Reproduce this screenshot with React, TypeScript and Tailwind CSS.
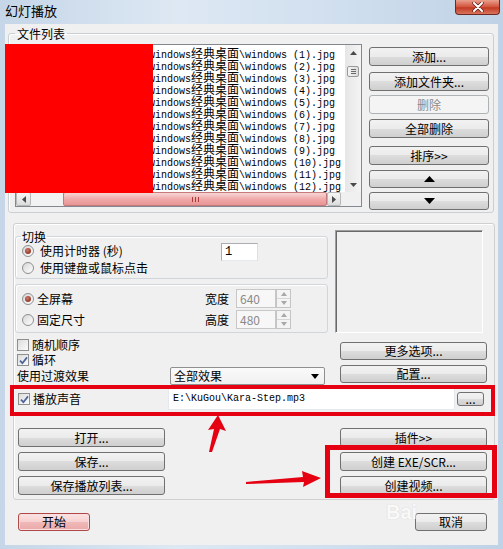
import React from 'react';

const cjk = "font-[family-name:'Noto_Sans_CJK_SC',sans-serif]";
const mono = "font-[family-name:'Liberation_Mono','Noto_Sans_CJK_SC',monospace]";

const Btn: React.FC<{ children?: React.ReactNode; className?: string; disabled?: boolean; pink?: boolean }> = ({ children, className = '', disabled, pink }) => {
  let look = 'border-[#707070] bg-[linear-gradient(#f2f2f2,#ebebeb_50%,#dddddd_50%,#cfcfcf)] text-black';
  if (disabled) look = 'border-[#adb2b5] bg-[#f4f4f4] text-[#8a8a8a]';
  if (pink) look = 'border-[#b04848] bg-[linear-gradient(#fbe4e4,#f6cfcf_50%,#f0b9b9_50%,#eaa8a8)] text-black shadow-[inset_0_0_0_1px_#f8dede]';
  return (
    <div className={`flex items-center justify-center rounded-[3px] border text-[12px] leading-none ${look} ${className}`}>
      {children}
    </div>
  );
};

const Radio: React.FC<{ checked?: boolean }> = ({ checked }) => (
  <span className="w-[12px] h-[12px] shrink-0 rounded-full border border-[#8e8f8f] bg-[linear-gradient(135deg,#d6d6d6,#ffffff)] flex items-center justify-center">
    {checked && <span className="w-[6px] h-[6px] rounded-full bg-[radial-gradient(circle_at_40%_35%,#d07a68,#7a1e12)]" />}
  </span>
);

const Check: React.FC<{ checked?: boolean }> = ({ checked }) => (
  <span className="w-[12px] h-[12px] shrink-0 border border-[#8e8f8f] bg-[linear-gradient(135deg,#dcdcdc,#fbfbfb)] flex items-center justify-center">
    {checked && (
      <svg width="9" height="9" viewBox="0 0 9 9">
        <path d="M1 4.6 L3.4 7.2 L8 1.4" stroke="#4d6297" strokeWidth="1.7" fill="none" />
      </svg>
    )}
  </span>
);

const Spin: React.FC = () => (
  <div className="w-[15px] h-[19px] flex flex-col border border-[#c4c4c4] bg-[#f4f4f4]">
    <div className="flex-1 flex items-center justify-center border-b border-[#d6d6d6]">
      <svg width="6" height="4" viewBox="0 0 6 4"><path d="M0 4 L3 0 L6 4Z" fill="#a8a8a8" /></svg>
    </div>
    <div className="flex-1 flex items-center justify-center">
      <svg width="6" height="4" viewBox="0 0 6 4"><path d="M0 0 L3 4 L6 0Z" fill="#a8a8a8" /></svg>
    </div>
  </div>
);

const rows = Array.from({ length: 12 }, (_, i) => i + 1);

export default function App() {
  return (
    <div className={`relative w-[503px] h-[549px] overflow-hidden flex flex-col bg-[linear-gradient(90deg,#c5d6e8,#dde8f3_35%,#cfdeee_70%,#bfd2e6)] ${cjk}`}>
      {/* title bar */}
      <div className="h-[24px] shrink-0 flex items-start">
        <span className="ml-[5px] mt-[4px] text-[13px] leading-[14px] text-black">幻灯播放</span>
        <div className="ml-auto mr-[3px] w-[45px] h-[15px] rounded-b-[4px] border border-t-0 border-[#6e2a22] bg-[linear-gradient(#e9a08e,#d2533c_50%,#c23a22_55%,#d9745c)] flex items-center justify-center">
          <svg width="12" height="10" viewBox="0 0 12 10">
            <path d="M2 1 L10 9 M10 1 L2 9" stroke="#5a2018" strokeWidth="3.4" strokeLinecap="round" />
            <path d="M2 1 L10 9 M10 1 L2 9" stroke="#ffffff" strokeWidth="2" strokeLinecap="round" />
          </svg>
        </div>
      </div>

      {/* client area */}
      <div className="ml-[5px] w-[493px] h-[521px] shrink-0 bg-[#f0f0f0] flex flex-col">
        {/* 文件列表 */}
        <fieldset className="ml-[3px] mt-[3px] w-[486px] h-[186px] border border-[#c8d0d6] rounded-[3px] pl-[6px] shadow-[inset_1px_1px_0_#ffffff]">
          <legend className="px-[2px] text-[12px] leading-[13px]">文件列表</legend>
          <div className="flex mt-[4px]">
            {/* list box */}
            <div className="w-[347px] h-[163px] border border-[#828790] bg-white flex flex-col">
              <div className="flex h-[147px]">
                <div className={`w-[329px] overflow-hidden pt-[2px] ${mono}`}>
                  {rows.map((i) => (
                    <div key={i} className="h-[12px] leading-[12px] whitespace-pre pl-[133px] text-black">
                      <span className="text-[10px]">windows</span>
                      <span className={`text-[12px] ${cjk}`}>经典桌面</span>
                      <span className="text-[10px]">{`\\windows (${i}).jpg`}</span>
                    </div>
                  ))}
                </div>
                {/* vertical scrollbar */}
                <div className="w-[16px] bg-[linear-gradient(90deg,#e6e6e6,#f4f4f4)] flex flex-col items-center">
                  <div className="h-[15px] w-full flex items-center justify-center">
                    <svg width="7" height="4" viewBox="0 0 7 4"><path d="M0 4 L3.5 0 L7 4Z" fill="#4a4a4a" /></svg>
                  </div>
                  <div className="mt-[6px] w-[12px] h-[11px] rounded-[2px] border border-[#9a9a9a] bg-[linear-gradient(90deg,#f4f4f4,#dcdcdc)] flex flex-col items-center justify-center gap-[1px]">
                    <span className="w-[5px] h-[1px] bg-[#6a6a6a]" />
                    <span className="w-[5px] h-[1px] bg-[#6a6a6a]" />
                    <span className="w-[5px] h-[1px] bg-[#6a6a6a]" />
                  </div>
                  <div className="mt-auto h-[15px] w-full flex items-center justify-center">
                    <svg width="7" height="4" viewBox="0 0 7 4"><path d="M0 0 L3.5 4 L7 0Z" fill="#4a4a4a" /></svg>
                  </div>
                </div>
              </div>
              {/* horizontal scrollbar */}
              <div className="flex h-[14px] bg-[#ececec]">
                <div className="w-[15px] h-full border border-[#b8b8b8] rounded-[2px] bg-[linear-gradient(#f6f6f6,#dcdcdc)] flex items-center justify-center">
                  <svg width="4" height="7" viewBox="0 0 4 7"><path d="M4 0 L0 3.5 L4 7Z" fill="#4a4a4a" /></svg>
                </div>
                <div className="w-[32px] bg-[#f2f2f2]" />
                <div className="w-[264px] h-full rounded-[2px] border border-[#c47a7a] bg-[linear-gradient(#f9d6d6,#f0aaaa_50%,#e99494)] flex items-center justify-center gap-[2px]">
                  <span className="w-[1px] h-[5px] bg-[#a83a3a]" />
                  <span className="w-[1px] h-[5px] bg-[#a83a3a]" />
                  <span className="w-[1px] h-[5px] bg-[#a83a3a]" />
                </div>
                <div className="w-[14px] h-full border border-[#b8b8b8] rounded-[2px] bg-[linear-gradient(#f6f6f6,#dcdcdc)] flex items-center justify-center">
                  <svg width="4" height="7" viewBox="0 0 4 7"><path d="M0 0 L4 3.5 L0 7Z" fill="#4a4a4a" /></svg>
                </div>
                <div className="flex-1 bg-[#f0f0f0]" />
              </div>
            </div>
            {/* buttons */}
            <div className="ml-[7px] w-[120px] flex flex-col">
              <Btn className="mt-[3px] h-[19px]">添加...</Btn>
              <Btn className="mt-[6px] h-[19px]">添加文件夹...</Btn>
              <Btn disabled className="mt-[4px] h-[19px]">删除</Btn>
              <Btn className="mt-[5px] h-[19px]">全部删除</Btn>
              <Btn className="mt-[8px] h-[19px]">排序&gt;&gt;</Btn>
              <Btn className="mt-[5px] h-[18px]">
                <svg width="11" height="6" viewBox="0 0 11 6"><path d="M0 6 L5.5 0 L11 6Z" fill="#000" /></svg>
              </Btn>
              <Btn className="mt-[4px] h-[18px]">
                <svg width="11" height="6" viewBox="0 0 11 6"><path d="M0 0 L5.5 6 L11 0Z" fill="#000" /></svg>
              </Btn>
            </div>
          </div>
        </fieldset>

        {/* options panel */}
        <div className="ml-[8px] mt-[10px] w-[482px] h-[277px] border border-[#cfcfcf] rounded-[3px] shadow-[inset_1px_1px_0_#ffffff] flex flex-col text-[12px] leading-[14px]">
          {/* row A */}
          <div className="flex items-start">
            <div className="ml-[1px] w-[313px] flex flex-col">
              <fieldset className="mt-[6px] h-[49px] border border-[#d0d7dc] rounded-[3px] pl-[5px] shadow-[inset_1px_1px_0_#ffffff]">
                <legend className="px-[1px] text-[12px] leading-[13px]">切换</legend>
                <div className="h-[16px] flex items-center">
                  <span className="ml-[1px]"><Radio checked /></span>
                  <span className="ml-[6px] w-[181px]">使用计时器 (秒)</span>
                  <div className={`w-[37px] h-[18px] mt-[2px] border border-[#abadb3] border-b-[#e3e9ef] border-r-[#dbdfe6] bg-white pl-[3px] text-[12px] leading-[16px] ${mono}`}>1</div>
                </div>
                <div className="h-[16px] mt-[1px] flex items-center">
                  <span className="ml-[1px]"><Radio /></span>
                  <span className="ml-[6px]">使用键盘或鼠标点击</span>
                </div>
              </fieldset>
              <div className="mt-[5px] h-[49px] border border-[#d0d7dc] rounded-[3px] shadow-[inset_1px_1px_0_#ffffff] pt-[4px] flex flex-col gap-[2px]">
                <div className="h-[19px] flex items-center">
                  <span className="ml-[6px]"><Radio checked /></span>
                  <span className="ml-[3px] w-[168px]">全屏幕</span>
                  <span className="w-[31px]">宽度</span>
                  <div className="w-[40px] h-[19px] border border-[#c8c8c8] bg-[#f7f7f7] text-[#8a8a8a] pl-[3px] leading-[17px]">640</div>
                  <Spin />
                </div>
                <div className="h-[19px] flex items-center">
                  <span className="ml-[6px]"><Radio /></span>
                  <span className="ml-[3px] w-[168px]">固定尺寸</span>
                  <span className="w-[31px]">高度</span>
                  <div className="w-[40px] h-[19px] border border-[#c8c8c8] bg-[#f7f7f7] text-[#8a8a8a] pl-[3px] leading-[17px]">480</div>
                  <Spin />
                </div>
              </div>
            </div>
            <div className="ml-[7px] mt-[6px] w-[148px] h-[103px] border border-[#a0a0a0] border-b-[#ffffff] border-r-[#ffffff] shadow-[inset_1px_1px_0_#696969]" />
          </div>

          {/* row B */}
          <div className="flex items-start">
            <div className="ml-[3px] w-[308px] flex flex-col">
              <div className="mt-[6px] h-[12px] flex items-center">
                <Check />
                <span className="ml-[3px]">随机顺序</span>
              </div>
              <div className="mt-[3px] h-[12px] flex items-center">
                <Check checked />
                <span className="ml-[3px]">循环</span>
              </div>
              <div className="mt-[1px] h-[18px] flex items-center">
                <span className="w-[153px]">使用过渡效果</span>
                <div className="w-[155px] h-[18px] rounded-[2px] border border-[#8f8f8f] bg-[linear-gradient(#fafafa,#f0f0f0)] flex items-center pl-[3px]">
                  <span>全部效果</span>
                  <svg className="ml-auto mr-[5px]" width="8" height="5" viewBox="0 0 8 5"><path d="M0 0 L4 5 L8 0Z" fill="#000" /></svg>
                </div>
              </div>
            </div>
            <div className="ml-[15px] w-[147px] flex flex-col">
              <Btn className="mt-[9px] h-[18px]">更多选项...</Btn>
              <Btn className="mt-[5px] h-[18px]">配置...</Btn>
            </div>
          </div>

          {/* row C: sound */}
          <div className="mt-[3px] h-[22px] flex items-center">
            <span className="ml-[4px]"><Check checked /></span>
            <span className="ml-[3px] w-[135px]">播放声音</span>
            <div className={`w-[287px] h-[22px] bg-white border border-[#e3e9ef] pl-[4px] text-[10px] leading-[20px] ${mono}`}>E:\KuGou\Kara-Step.mp3</div>
            <Btn className="ml-[2px] w-[27px] h-[14px] text-[10px]">...</Btn>
          </div>

          {/* row D: buttons */}
          <div className="mt-[18px] flex">
            <div className="ml-[4px] w-[147px] flex flex-col gap-[5px]">
              <Btn className="h-[19px]">打开...</Btn>
              <Btn className="h-[19px]">保存...</Btn>
              <Btn className="h-[19px]">保存播放列表...</Btn>
            </div>
            <div className="ml-[175px] w-[147px] flex flex-col gap-[5px]">
              <Btn className="h-[19px]">插件&gt;&gt;</Btn>
              <Btn className="h-[19px]">创建 EXE/SCR...</Btn>
              <Btn className="h-[19px]">创建视频...</Btn>
            </div>
          </div>
        </div>

        {/* bottom buttons */}
        <div className="mt-[13px] flex">
          <Btn pink className="ml-[13px] w-[72px] h-[18px]">开始</Btn>
          <Btn className="ml-auto mr-[11px] w-[72px] h-[18px]">取消</Btn>
        </div>
      </div>

      {/* redaction and annotations */}
      <div className="absolute left-[5px] top-[44px] w-[148px] h-[149px] bg-[#ff0000]" />
      <div className="absolute left-[10px] top-[385px] w-[485px] h-[31px] border-[4px] border-[#e50012]" />
      <div className="absolute left-[325px] top-[445px] w-[172px] h-[53px] border-[5px] border-[#e50012]" />
      <svg className="absolute inset-0 pointer-events-none" width="503" height="549" viewBox="0 0 503 549">
        <polygon points="218,415 226,431 220,429 212,452 209,452 214,429 208,430" fill="#e50012" />
        <polygon points="246,482 303,477 302,471 321,478 303,487 304,482 246,484" fill="#e50012" />
      </svg>
      <div className="absolute left-[386px] top-[500px] opacity-60 pointer-events-none">
        <span className="text-[20px] leading-[20px] font-bold text-white [text-shadow:0_0_1px_#b0b0b0] font-[family-name:'Liberation_Sans',sans-serif]">Bai</span>
      </div>
    </div>
  );
}
